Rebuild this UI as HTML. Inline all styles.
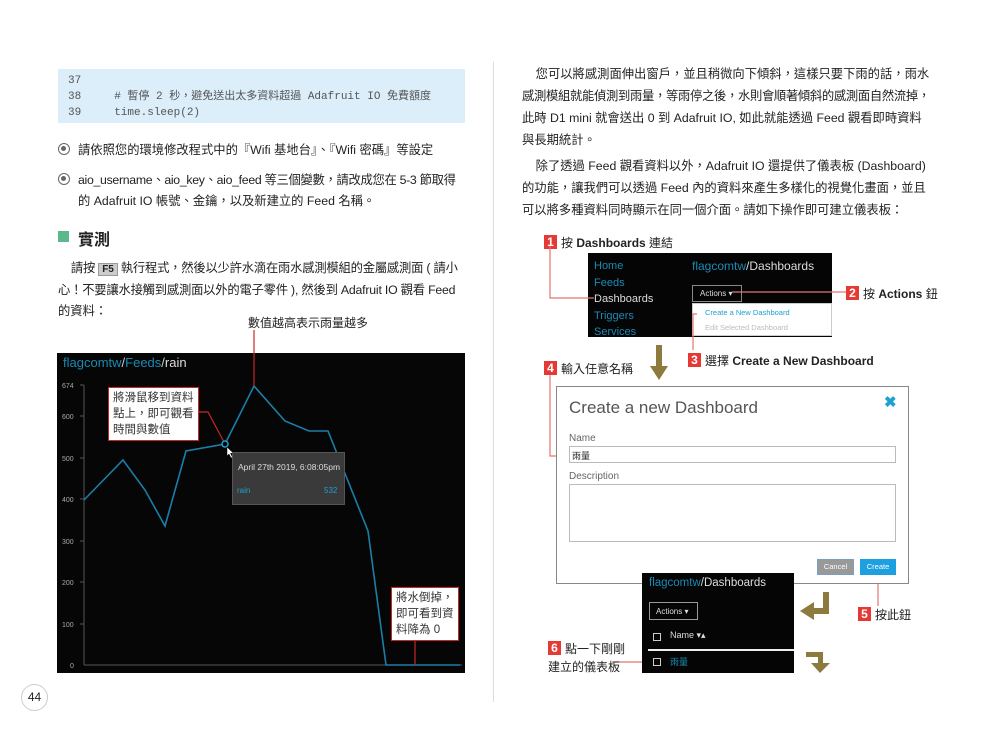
<!DOCTYPE html>
<html><head><meta charset="utf-8"><style>
*{margin:0;padding:0;box-sizing:border-box}
body{width:1000px;height:731px;background:#fff;position:relative;overflow:hidden;font-family:"Liberation Sans","Noto Sans CJK TC",sans-serif;color:#222}
.a{position:absolute;white-space:nowrap}
.t{font-size:12.3px;line-height:22px}
.num{display:inline-block;background:#e53935;color:#fff;font-weight:bold;font-size:12px;width:13px;height:14px;line-height:14px;text-align:center;margin-right:4px;vertical-align:1px}
.lab{font-size:12px}
.box{position:absolute;white-space:nowrap;background:#fff;border:1.5px solid #c62828;font-size:11.5px;line-height:16px;padding:2px 4px;color:#333}
.bullet{display:inline-block;width:12px;height:12px;border:1.5px solid #666;border-radius:50%;position:relative;margin-right:8px;vertical-align:-1px}
.bullet:after{content:"";position:absolute;left:2px;top:2px;width:5px;height:5px;border-radius:50%;background:#666}
</style></head><body>
<div class="a" style="left:493px;top:62px;width:1px;height:640px;background:#ddd"></div>

<div class="a" style="left:58px;top:69px;width:407px;height:54px;background:#dbeefa"></div>
<div class="a" style="left:68px;top:73px;font-family:'Liberation Mono','Noto Sans CJK TC',monospace;font-size:11px;line-height:16px;color:#555">37<br>38&nbsp;&nbsp;&nbsp;&nbsp;&nbsp;# 暫停 2 秒，避免送出太多資料超過 Adafruit IO 免費額度<br>39&nbsp;&nbsp;&nbsp;&nbsp;&nbsp;time.sleep(2)</div>

<div class="a t" style="left:58px;top:139px"><span class="bullet"></span>請依照您的環境修改程式中的『Wifi 基地台』、『Wifi 密碼』等設定</div>
<div class="a t" style="left:58px;top:169px;letter-spacing:-0.3px"><span class="bullet"></span>aio_username、aio_key、aio_feed 等三個變數，請改成您在 5-3 節取得</div>
<div class="a t" style="left:78px;top:190px">的 Adafruit IO 帳號、金鑰，以及新建立的 Feed 名稱。</div>

<div class="a" style="left:58px;top:231px;width:11px;height:11px;background:#5cb88a"></div>
<div class="a" style="left:78px;top:226px;font-size:16px;font-weight:bold">實測</div>

<div class="a t" style="left:58px;top:257px;letter-spacing:-0.2px">&nbsp;&nbsp;&nbsp;&nbsp;請按 <span style="background:#ccc;border:1px solid #999;font-size:10px;font-weight:bold;padding:0 3px">F5</span> 執行程式，然後以少許水滴在雨水感測模組的金屬感測面 ( 請小</div>
<div class="a t" style="left:58px;top:279px;letter-spacing:-0.2px">心！不要讓水接觸到感測面以外的電子零件 ), 然後到 Adafruit IO 觀看 Feed</div>
<div class="a t" style="left:58px;top:300px">的資料：</div>

<div class="a lab" style="left:248px;top:314px">數值越高表示雨量越多</div>

<div class="a" style="left:57px;top:353px;width:408px;height:320px;background:#060606"></div>
<div class="a" style="left:63px;top:355px;font-size:13px;color:#1a8ab5">flagcomtw<span style="color:#ccc">/</span>Feeds<span style="color:#ccc">/</span><span style="color:#ddd">rain</span></div>
<svg class="a" style="left:0;top:0" width="1000" height="731">
<g fill="#aaa" font-size="7" font-family="Liberation Sans">
<text x="62" y="388">674</text><text x="62" y="419">600</text><text x="62" y="461">500</text><text x="62" y="502">400</text><text x="62" y="544">300</text><text x="62" y="585">200</text><text x="62" y="627">100</text><text x="70" y="668">0</text></g>
<g stroke="#555" stroke-width="1"><line x1="84" y1="385" x2="84" y2="665"/><line x1="84" y1="665" x2="462" y2="665"/>
<line x1="80" y1="385" x2="84" y2="385"/><line x1="80" y1="416" x2="84" y2="416"/><line x1="80" y1="458" x2="84" y2="458"/><line x1="80" y1="499" x2="84" y2="499"/><line x1="80" y1="541" x2="84" y2="541"/><line x1="80" y1="582" x2="84" y2="582"/><line x1="80" y1="624" x2="84" y2="624"/></g>
<polyline fill="none" stroke="#1a7fa8" stroke-width="1.6" points="84,500 123,460 145,490 165,526 186,451 225,444 254,386 285,421 309,431 328,431 368,531 386,665 460,665"/>
<line x1="254" y1="330" x2="254" y2="386" stroke="#c62828" stroke-width="1.2"/>
<polyline fill="none" stroke="#c62828" stroke-width="1.2" points="196,412 208,412 224,442"/>
<line x1="415" y1="638" x2="415" y2="665" stroke="#c62828" stroke-width="1.2"/>
<circle cx="225" cy="444" r="3" fill="#000" stroke="#1ea0d0" stroke-width="1.5"/>
<path d="M227,447 l0,9 l2,-2 l2,4 l1.5,-0.7 l-2,-4 l3,0 z" fill="#fff" stroke="#000" stroke-width=".5"/>
</svg>
<div class="a" style="left:232px;top:452px;width:113px;height:53px;background:#3a3a3a;border:1px solid #555"></div>
<div class="a" style="left:238px;top:462px;font-size:8.5px;color:#ddd">April 27th 2019, 6:08:05pm</div>
<div class="a" style="left:237px;top:486px;font-size:8px;color:#1ea0d0">rain</div>
<div class="a" style="left:324px;top:486px;font-size:8px;color:#1ea0d0">532</div>
<div class="box" style="left:108px;top:387px">將滑鼠移到資料<br>點上，即可觀看<br>時間與數值</div>
<div class="box" style="left:391px;top:587px">將水倒掉，<br>即可看到資<br>料降為 0</div>

<div class="a" style="left:21px;top:684px;width:27px;height:27px;border:1px solid #ccc;border-radius:50%;text-align:center;line-height:25px;font-size:12px">44</div>

<div class="a t" style="left:522px;top:63px">&nbsp;&nbsp;&nbsp;&nbsp;您可以將感測面伸出窗戶，並且稍微向下傾斜，這樣只要下雨的話，雨水</div>
<div class="a t" style="left:522px;top:85px;letter-spacing:-0.3px">感測模組就能偵測到雨量，等雨停之後，水則會順著傾斜的感測面自然流掉，</div>
<div class="a t" style="left:522px;top:107px">此時 D1 mini 就會送出 0 到 Adafruit IO, 如此就能透過 Feed 觀看即時資料</div>
<div class="a t" style="left:522px;top:129px">與長期統計。</div>
<div class="a t" style="left:522px;top:155px">&nbsp;&nbsp;&nbsp;&nbsp;除了透過 Feed 觀看資料以外，Adafruit IO 還提供了儀表板 (Dashboard)</div>
<div class="a t" style="left:522px;top:177px">的功能，讓我們可以透過 Feed 內的資料來產生多樣化的視覺化畫面，並且</div>
<div class="a t" style="left:522px;top:199px">可以將多種資料同時顯示在同一個介面。請如下操作即可建立儀表板：</div>

<div class="a lab" style="left:544px;top:234px"><span class="num">1</span>按 <b>Dashboards</b> 連結</div>
<div class="a" style="left:588px;top:253px;width:244px;height:84px;background:#050505"></div>
<div class="a" style="left:594px;top:258px;font-size:11px;line-height:16.5px;color:#1a8ab5">Home<br>Feeds<br><span style="color:#ddd">Dashboards</span><br>Triggers<br>Services</div>
<div class="a" style="left:692px;top:259px;font-size:12px;color:#1a8ab5">flagcomtw<span style="color:#ddd">/Dashboards</span></div>
<div class="a" style="left:692px;top:285px;width:50px;height:17px;border:1px solid #888;font-size:8px;color:#ddd;padding:3px 0 0 7px">Actions ▾</div>
<div class="a" style="left:692px;top:303px;width:140px;height:33px;background:#fff;border:1px solid #ccc"></div>
<div class="a" style="left:705px;top:308px;font-size:7.5px;color:#1ea0d0">Create a New Dashboard</div>
<div class="a" style="left:705px;top:323px;font-size:7.5px;color:#bbb">Edit Selected Dashboard</div>
<svg class="a" style="left:0;top:0" width="1000" height="731">
<g stroke="#e57373" stroke-width="1.2" fill="none">
<polyline points="550,246 550,298 594,298"/>
<line x1="732" y1="292" x2="846" y2="292"/>
<polyline points="697,314 693,314 693,350"/>
<polyline points="550,372 550,456 570,456"/>
<line x1="878" y1="575" x2="878" y2="606"/>
<line x1="612" y1="662" x2="654" y2="662"/>
</g>
<g fill="#8c7a3e">
<rect x="656" y="345" width="6" height="22"/><polygon points="650,366 668,366 659,380"/>
<rect x="823" y="592" width="6" height="22"/><rect x="812" y="608" width="17" height="6"/><polygon points="800,611 814,602 814,620"/>
<rect x="806" y="652" width="17" height="5"/><rect x="818" y="652" width="5" height="12"/><polygon points="811,663 830,663 820,673"/>
</g>
</svg>
<div class="a lab" style="left:846px;top:285px"><span class="num">2</span>按 <b>Actions</b> 鈕</div>
<div class="a lab" style="left:688px;top:352px"><span class="num">3</span>選擇 <b>Create a New Dashboard</b></div>
<div class="a lab" style="left:544px;top:360px"><span class="num">4</span>輸入任意名稱</div>

<div class="a" style="left:556px;top:386px;width:353px;height:198px;border:1.5px solid #888;background:#fff"></div>
<div class="a" style="left:569px;top:398px;font-size:17px;color:#555">Create a new Dashboard</div>
<div class="a" style="left:884px;top:393px;font-size:15px;font-weight:bold;color:#1ea0d0">✖</div>
<div class="a" style="left:569px;top:433px;font-size:10px;color:#666">Name</div>
<div class="a" style="left:569px;top:446px;width:327px;height:17px;border:1px solid #bbb;font-size:9px;padding:2px 2px">雨量</div>
<div class="a" style="left:569px;top:471px;font-size:10px;color:#666">Description</div>
<div class="a" style="left:569px;top:484px;width:327px;height:58px;border:1px solid #bbb"></div>
<div class="a" style="left:817px;top:559px;width:37px;height:16px;background:#999;border:1px solid #7a9fc0;color:#fff;font-size:7.5px;text-align:center;line-height:14px">Cancel</div>
<div class="a" style="left:860px;top:559px;width:36px;height:16px;background:#1ea0e0;color:#fff;font-size:7.5px;text-align:center;line-height:16px">Create</div>
<div class="a lab" style="left:858px;top:606px"><span class="num">5</span>按此鈕</div>

<div class="a" style="left:642px;top:573px;width:152px;height:100px;background:#050505"></div>
<div class="a" style="left:649px;top:577px;font-size:11.5px;color:#1a8ab5">flagcomtw<span style="color:#ddd">/Dashboards</span></div>
<div class="a" style="left:649px;top:602px;width:49px;height:18px;border:1px solid #999;font-size:8px;color:#ddd;padding:4px 0 0 6px">Actions ▾</div>
<div class="a" style="left:653px;top:633px;width:8px;height:8px;border:1px solid #ccc"></div>
<div class="a" style="left:670px;top:630px;font-size:9px;color:#ddd">Name ▾▴</div>
<div class="a" style="left:648px;top:649px;width:146px;height:2px;background:#eee"></div>
<div class="a" style="left:653px;top:658px;width:8px;height:8px;border:1px solid #ccc"></div>
<div class="a" style="left:670px;top:655px;font-size:9px;color:#1a8ab5">雨量</div>
<div class="a lab" style="left:548px;top:640px;line-height:18px"><span class="num">6</span>點一下剛剛<br>建立的儀表板</div>
</body></html>
